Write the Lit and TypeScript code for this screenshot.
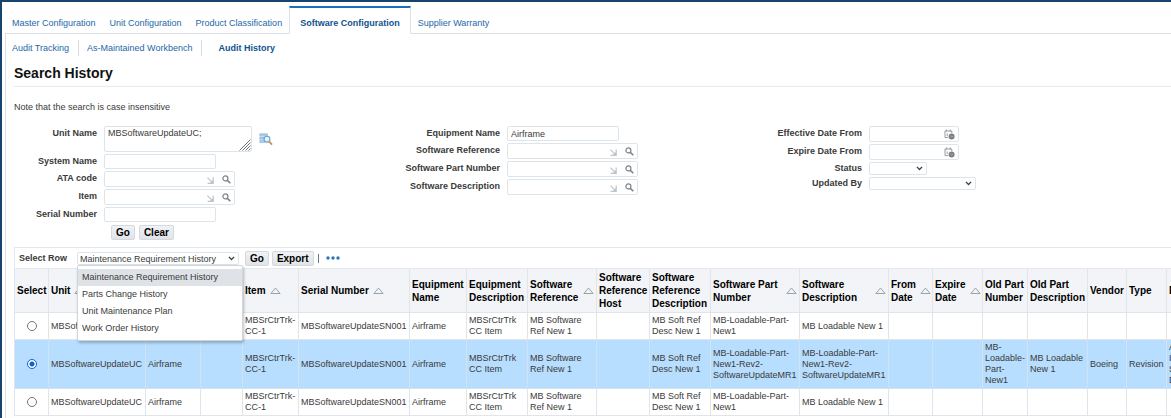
import { LitElement, html, css, svg, nothing } from "lit";
import { customElement, property, state } from "lit/decorators.js";
import { classMap } from "lit/directives/class-map.js";

const searchIcon = html`<svg width="9" height="9" viewBox="0 0 9 9" aria-hidden="true">
  <circle cx="3.4" cy="3.4" r="2.5" fill="none" stroke="#7d848a" stroke-width="1.2" />
  <path d="M5.4 5.4 8.3 8.3" stroke="#7d848a" stroke-width="1.6" />
</svg>`;

const cornerIcon = html`<svg class="corner" width="7" height="7" viewBox="0 0 7 7" aria-hidden="true">
  <path d="M.4 .6 5 5.2M6.2 .6V6.4H.6M3.4 5.6H5.4V3.4" fill="none" stroke="#bcc5cb" stroke-width="1.2" />
</svg>`;

const calendarIcon = html`<svg width="11" height="11" viewBox="0 0 11 11" aria-hidden="true">
  <path d="M1 2H7.8V4.2M1 2V8.6H4.2M2.4.4V2.6M6.2.4V2.6M3.2 4.4V7" fill="none" stroke="#979da1" stroke-width="1" />
  <circle cx="7.6" cy="7.4" r="3" fill="#7b8084" />
  <path d="M6 6.6 7.4 7.8 9.2 7.4" fill="none" stroke="#b4b8bb" stroke-width=".7" />
</svg>`;

const browseIcon = html`<svg width="14" height="13" viewBox="0 0 14 13" aria-hidden="true">
  <path d="M.8 .8H8.4V2.8H.8zM.8 4H5V6.2H.8zM.8 7.4H5.6V9.6H.8z" fill="#a9cdea" stroke="#8db8db" stroke-width=".7" />
  <path d="M10.2 8.6 13 11.6" stroke="#d08f3a" stroke-width="1.8" />
  <circle cx="8" cy="6.2" r="2.9" fill="#e4f3ff" stroke="#6b9fcc" stroke-width="1.1" />
</svg>`;

const chevron = html`<svg class="chevron" width="7" height="5" viewBox="0 0 7 5" aria-hidden="true">
  <path d="M.9.9 3.5 3.5 6.1.9" fill="none" stroke="#3a3f43" stroke-width="1.3" />
</svg>`;

const sortIcon = svg`<path d="M.9 6.5 5.5 1 10.1 6.5z" fill="none" stroke="#98a4ac" stroke-width="1" />`;

interface Column {
  label: string;
  width: number;
  sort?: boolean;
}

const columns: Column[] = [
  { label: "Select", width: 34 },
  { label: "Unit", width: 97, sort: true },
  { label: "", width: 55 },
  { label: "", width: 42 },
  { label: "Item", width: 56, sort: true },
  { label: "Serial Number", width: 111, sort: true },
  { label: "Equipment\nName", width: 57 },
  { label: "Equipment\nDescription", width: 61 },
  { label: "Software\nReference", width: 69, sort: true },
  { label: "Software\nReference\nHost", width: 53 },
  { label: "Software\nReference\nDescription", width: 61 },
  { label: "Software Part\nNumber", width: 89, sort: true },
  { label: "Software\nDescription", width: 89, sort: true },
  { label: "From\nDate", width: 44, sort: true },
  { label: "Expire\nDate", width: 50, sort: true },
  { label: "Old Part\nNumber", width: 45 },
  { label: "Old Part\nDescription", width: 60 },
  { label: "Vendor", width: 39 },
  { label: "Type", width: 40 },
  { label: "D", width: 60 },
];
const tableWidth = columns.reduce((sum, c) => sum + c.width, 1);

const common = [
  "MBSoftwareUpdateUC", "Airframe", "", "MBSrCtrTrk-\nCC-1", "MBSoftwareUpdateSN001", "Airframe",
  "MBSrCtrTrk\nCC Item", "MB Software\nRef New 1", "", "MB Soft Ref\nDesc New 1",
];
const plain = [...common, "MB-Loadable-Part-\nNew1", "MB Loadable New 1", "", "", "", "", "", "", ""];
const revised = [
  ...common,
  "MB-Loadable-Part-\nNew1-Rev2-\nSoftwareUpdateMR1",
  "MB-Loadable-Part-\nNew1-Rev2-\nSoftwareUpdateMR1",
  "", "",
  "MB-\nLoadable-\nPart-\nNew1",
  "MB Loadable\nNew 1",
  "Boeing",
  "Revision",
  "A\nI\nS\nD",
];
const rows = [plain, revised, plain];

const base = css`
  * {
    box-sizing: border-box;
  }
  button,
  input,
  textarea,
  select {
    font: inherit;
    color: inherit;
    margin: 0;
  }
  svg {
    display: block;
    flex: none;
  }
  .button {
    height: 15px;
    padding: 0 4px;
    border: 1px solid #d3d9de;
    border-radius: 2px;
    background: linear-gradient(#f0f2f4, #e0e4e8);
    color: #000;
    font-size: 10px;
    line-height: 13px;
    font-weight: bold;
  }
  .pick {
    display: grid;
    align-items: center;
  }
  .pick > * {
    grid-area: 1 / 1;
  }
  .pick select {
    width: 100%;
    height: 13px;
    padding: 0 2px;
    border: 1px solid #dde5eb;
    border-radius: 2px;
    background: #fff;
    appearance: none;
  }
  .chevron {
    justify-self: end;
    margin-right: 4px;
    pointer-events: none;
  }
`;

@customElement("search-form")
class SearchForm extends LitElement {
  static styles = [
    base,
    css`
      :host {
        display: grid;
        grid-template-columns: 387fr 362fr 408fr;
      }
      .group {
        display: flex;
        flex-direction: column;
        gap: 2px;
      }
      .row {
        display: flex;
        gap: 7px;
      }
      label {
        width: 99px;
        flex: none;
        text-align: right;
        font-weight: bold;
        line-height: 15px;
        white-space: nowrap;
      }
      .first label {
        width: 83px;
      }
      .short label {
        line-height: 13px;
      }
      .box {
        display: flex;
        align-items: center;
        border: 1px solid #dde5eb;
        border-radius: 2px;
        background: #fff;
      }
      .text {
        width: 112px;
        height: 15px;
      }
      .lookup {
        width: 131px;
        height: 16px;
      }
      .date {
        width: 90px;
        height: 16px;
      }
      input {
        flex: 1;
        min-width: 0;
        height: 13px;
        padding: 0 3px;
        border: 0;
        background: none;
      }
      input:focus,
      textarea:focus {
        outline: none;
      }
      .icon {
        padding: 0;
        border: 0;
        background: none;
      }
      .lookup .icon {
        margin: 0 3px 0 8px;
      }
      .date .icon {
        margin-right: 3px;
      }
      .corner {
        margin-top: 3px;
      }
      .area {
        display: grid;
        width: 148px;
        height: 26px;
      }
      .area > * {
        grid-area: 1 / 1;
      }
      textarea {
        width: 100%;
        height: 100%;
        padding: 0 3px;
        border: 1px solid #dde5eb;
        border-radius: 2px;
        line-height: 12px;
        resize: none;
        overflow: hidden;
      }
      .grip {
        place-self: end;
        margin: 1px;
        pointer-events: none;
      }
      .browse {
        align-self: center;
      }
      .status {
        width: 58px;
      }
      .updated {
        width: 107px;
      }
      .actions {
        display: flex;
        gap: 4px;
        padding: 1px 0 0 97px;
      }
    `,
  ];

  private text(id: string, label: string, value = "") {
    return html`<div class="row">
      <label for=${id}>${label}</label>
      <div class="box text"><input id=${id} type="text" .value=${value} /></div>
    </div>`;
  }

  private lookup(id: string, label: string) {
    return html`<div class="row">
      <label for=${id}>${label}</label>
      <div class="box lookup">
        <input id=${id} type="text" />${cornerIcon}<button class="icon" type="button" aria-label="Search ${label}">${searchIcon}</button>
      </div>
    </div>`;
  }

  private date(id: string, label: string) {
    return html`<div class="row">
      <label for=${id}>${label}</label>
      <div class="box date">
        <input id=${id} type="text" /><button class="icon" type="button" aria-label="Pick ${label}">${calendarIcon}</button>
      </div>
    </div>`;
  }

  private choice(id: string, label: string) {
    return html`<div class="row short">
      <label for=${id}>${label}</label>
      <div class="pick ${id}"><select id=${id}><option></option></select>${chevron}</div>
    </div>`;
  }

  render() {
    return html`
      <div class="group first">
        <div class="row">
          <label for="unit">Unit Name</label>
          <div class="area">
            <textarea id="unit" .value=${"MBSoftwareUpdateUC;"}></textarea>
            <svg class="grip" width="12" height="12" viewBox="0 0 12 12" aria-hidden="true">
              <path d="M.5 11.5 11.5.5M3.5 11.5 11.5 3.5M6.5 11.5 11.5 6.5M9.5 11.5 11.5 9.5" stroke="#70757a" stroke-width="1" />
            </svg>
          </div>
          <button class="icon browse" type="button" aria-label="Browse units">${browseIcon}</button>
        </div>
        ${this.text("system", "System Name")} ${this.lookup("ata", "ATA code")} ${this.lookup("item", "Item")}
        ${this.text("serial", "Serial Number")}
        <div class="actions">
          <button class="button" type="button">Go</button>
          <button class="button" type="button">Clear</button>
        </div>
      </div>
      <div class="group">
        ${this.text("equipment", "Equipment Name", "Airframe")} ${this.lookup("reference", "Software Reference")}
        ${this.lookup("part", "Software Part Number")} ${this.lookup("description", "Software Description")}
      </div>
      <div class="group">
        ${this.date("effective", "Effective Date From")} ${this.date("expire", "Expire Date From")}
        ${this.choice("status", "Status")} ${this.choice("updated", "Updated By")}
      </div>
    `;
  }
}

@customElement("history-toolbar")
class HistoryToolbar extends LitElement {
  @property({ type: Array }) options: string[] = [];
  @state() private chosen = 0;

  static styles = [
    base,
    css`
      :host {
        display: flex;
        align-items: center;
        height: 22px;
        padding-left: 4px;
        border: 1px solid #e3e8ec;
        border-right: 0;
      }
      label {
        width: 58px;
        font-weight: bold;
      }
      .pick {
        position: relative;
        width: 162px;
        margin-right: 6px;
      }
      .pick .menu {
        position: absolute;
        z-index: 2;
        top: 13px;
        left: 0;
        width: 166px;
        margin: 0;
        padding: 3px 0;
        list-style: none;
        background: #fff;
        border: 1px solid #cfd6dc;
        border-radius: 2px;
        box-shadow: 1px 2px 3px rgb(0 0 0 / 25%);
      }
      .option {
        padding: 0 4px;
        line-height: 17px;
        cursor: pointer;
      }
      .option.active {
        background: #dfe3e8;
      }
      .button {
        margin-right: 3px;
      }
      .bar {
        width: 1px;
        height: 9px;
        margin: 0 7px 0 1px;
        background: #6c7a88;
      }
      .more {
        padding: 0;
        border: 0;
        background: none;
      }
    `,
  ];

  render() {
    return html`
      <label for="view">Select Row</label>
      <div class="pick">
        <select id="view">
          ${this.options.map((o, i) => html`<option ?selected=${i === this.chosen}>${o}</option>`)}
        </select>
        ${chevron}
        <ul class="menu" role="listbox">
          ${this.options.map(
            (o, i) => html`<li
              class=${classMap({ option: true, active: i === this.chosen })}
              role="option"
              @click=${() => (this.chosen = i)}
            >${o}</li>`,
          )}
        </ul>
      </div>
      <button class="button" type="button">Go</button>
      <button class="button" type="button">Export</button>
      <span class="bar"></span>
      <button class="more" type="button" aria-label="More">
        <svg width="14" height="4" viewBox="0 0 14 4">
          <g fill="#2b76bd"><circle cx="2" cy="2" r="1.7" /><circle cx="7" cy="2" r="1.7" /><circle cx="12" cy="2" r="1.7" /></g>
        </svg>
      </button>
    `;
  }
}

@customElement("history-table")
class HistoryTable extends LitElement {
  @state() private selected = 1;

  static styles = [
    base,
    css`
      :host {
        display: block;
        overflow: hidden;
      }
      table {
        table-layout: fixed;
        border-collapse: separate;
        border-spacing: 0;
        border-left: 1px solid #dfe5ea;
      }
      th,
      td {
        padding: 0 0 0 2px;
        border-right: 1px solid #dfe5ea;
        border-bottom: 1px solid #dfe5ea;
        text-align: left;
        vertical-align: middle;
        white-space: pre;
      }
      th {
        height: 44px;
        background: #f2f4f7;
        color: #000;
        font-size: 10px;
        line-height: 13px;
      }
      td {
        height: 27px;
        line-height: 11px;
      }
      .selected td {
        height: 49px;
        background: #b8deff;
        border-color: #cfe3f2;
      }
      .head {
        display: flex;
        align-items: center;
        gap: 4px;
      }
      .spread .head {
        justify-content: space-between;
        padding-right: 2px;
      }
      .choose {
        padding: 0;
        white-space: normal;
      }
      input {
        display: block;
        width: 10px;
        height: 10px;
        margin: 0 auto;
        appearance: none;
        border: 1px solid #767676;
        border-radius: 50%;
        background: #fff;
      }
      input:checked {
        border: 1px solid #0b63ce;
        background: radial-gradient(circle, #0b63ce 0 2px, #fff 3px);
      }
    `,
  ];

  render() {
    return html`<table style="width:${tableWidth}px">
      <colgroup>
        ${columns.map((c) => html`<col style="width:${c.width}px" />`)}
      </colgroup>
      <thead>
        <tr>
          ${columns.map(
            (c) => html`<th class=${classMap({ spread: !!c.sort && c.label.includes("\n") })} scope="col"><div class="head"><span>${c.label}</span>${c.sort
              ? html`<svg width="11" height="7" viewBox="0 0 11 7" aria-hidden="true">${sortIcon}</svg>`
              : nothing}</div></th>`,
          )}
        </tr>
      </thead>
      <tbody>
        ${rows.map(
          (cells, i) => html`<tr class=${classMap({ selected: i === this.selected })}>
            <td class="choose">
              <input type="radio" name="row" aria-label="Select row ${i + 1}" .checked=${i === this.selected} @change=${() => (this.selected = i)} />
            </td>
            ${cells.map((c) => html`<td>${c}</td>`)}
          </tr>`,
        )}
      </tbody>
    </table>`;
  }
}

@customElement("app-root")
class AppRoot extends LitElement {
  static styles = [
    base,
    css`
      :host {
        display: block;
        box-sizing: border-box;
        min-height: 100vh;
        overflow: hidden;
        border-top: 2px solid #17446e;
        border-left: 2px solid #17446e;
        background: #fff;
        color: #3a3a3a;
        font: 9px/12px "Liberation Sans", Arial, sans-serif;
      }
      a {
        color: #2468a8;
        text-decoration: none;
        white-space: nowrap;
      }
      a.current {
        color: #11528f;
        font-weight: bold;
      }
      .tabs {
        display: flex;
        height: 32px;
        padding-top: 4px;
        margin-left: 3px;
      }
      .tabs::after {
        content: "";
        flex: 1;
        border-bottom: 1px solid #dae0e6;
      }
      .tabs a {
        padding: 11px 7px 0;
        border-bottom: 1px solid #dae0e6;
      }
      .tabs a.current {
        padding: 9px 10px 0;
        border: 1px solid #dae0e6;
        border-top: 2px solid #1a6fc0;
        border-bottom-color: #fff;
      }
      .panel {
        min-height: calc(100vh - 34px);
        margin-left: 3px;
        padding-left: 8px;
        border-left: 1px solid #dae0e6;
      }
      .subtabs {
        display: flex;
        padding-top: 6px;
        margin-left: -2px;
      }
      .subtabs a {
        padding-right: 9px;
        margin-right: 8px;
        border-right: 1px solid #d5dbe1;
        line-height: 16px;
      }
      .subtabs a.current {
        padding-left: 8px;
        border: 0;
      }
      h1 {
        margin: 8px 0 0;
        padding-bottom: 4px;
        border-bottom: 1px solid #e6edf2;
        color: #111;
        font-size: 14px;
        line-height: 18px;
      }
      .note {
        margin: 14px 0 13px;
      }
      history-toolbar {
        margin-top: 7px;
      }
    `,
  ];

  render() {
    return html`
      <nav class="tabs">
        <a href="#master">Master Configuration</a>
        <a href="#unit">Unit Configuration</a>
        <a href="#product">Product Classification</a>
        <a href="#software" class="current">Software Configuration</a>
        <a href="#warranty">Supplier Warranty</a>
      </nav>
      <main class="panel">
        <nav class="subtabs">
          <a href="#tracking">Audit Tracking</a>
          <a href="#workbench">As-Maintained Workbench</a>
          <a href="#history" class="current">Audit History</a>
        </nav>
        <h1>Search History</h1>
        <p class="note">Note that the search is case insensitive</p>
        <search-form></search-form>
        <history-toolbar
          .options=${["Maintenance Requirement History", "Parts Change History", "Unit Maintenance Plan", "Work Order History"]}
        ></history-toolbar>
        <history-table></history-table>
      </main>
    `;
  }
}
